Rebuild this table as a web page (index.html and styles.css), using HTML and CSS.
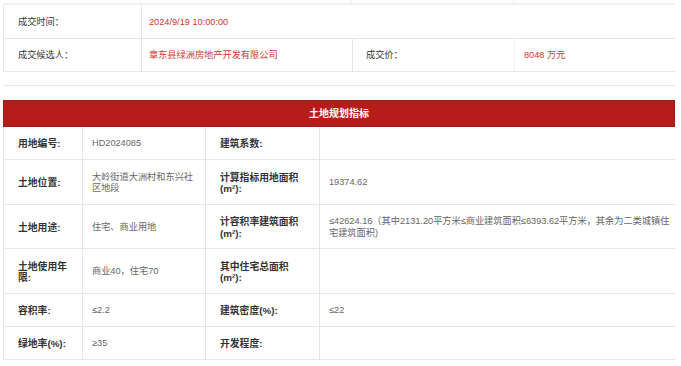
FILE: index.html
```html
<!DOCTYPE html>
<html lang="zh">
<head>
<meta charset="utf-8">
<title>土地规划指标</title>
<link rel="stylesheet" href="styles.css">
</head>
<body>
<div class="page">
  <div class="stub">
    <div class="stub-cell c1"></div>
    <div class="stub-cell c2"></div>
    <div class="stub-cell c3"></div>
    <div class="stub-cell c4"></div>
  </div>
  <table class="deal">
    <colgroup>
      <col class="d1"><col class="d2"><col class="d3"><col class="d4">
    </colgroup>
    <tr class="r1">
      <td class="lab">成交时间：</td>
      <td class="val red" colspan="3">2024/9/19 10:00:00</td>
    </tr>
    <tr class="r2">
      <td class="lab">成交候选人：</td>
      <td class="val red">章东县绿洲房地产开发有限公司</td>
      <td class="lab lab3">成交价：</td>
      <td class="val red val4">8048 万元</td>
    </tr>
  </table>
  <div class="spacer"></div>

  <div class="band">土地规划指标</div>
  <table class="plan">
    <colgroup>
      <col class="p1"><col class="p2"><col class="p3"><col class="p4">
    </colgroup>
    <tr class="h33">
      <td class="k">用地编号:</td>
      <td class="v">HD2024085</td>
      <td class="k k3">建筑系数:</td>
      <td class="v"></td>
    </tr>
    <tr class="h45">
      <td class="k">土地位置:</td>
      <td class="v">大岭街道大洲村和东兴社区地段</td>
      <td class="k k3">计算指标用地面积(m²):</td>
      <td class="v">19374.62</td>
    </tr>
    <tr class="h44">
      <td class="k">土地用途:</td>
      <td class="v">住宅、商业用地</td>
      <td class="k k3">计容积率建筑面积(m²):</td>
      <td class="v long">≤42624.16（其中2131.20平方米≤商业建筑面积≤6393.62平方米，其余为二类城镇住宅建筑面积)</td>
    </tr>
    <tr class="h45">
      <td class="k">土地使用年限:</td>
      <td class="v">商业40，住宅70</td>
      <td class="k k3">其中住宅总面积(m²):</td>
      <td class="v"></td>
    </tr>
    <tr class="h33">
      <td class="k">容积率:</td>
      <td class="v">≤2.2</td>
      <td class="k k3">建筑密度(%):</td>
      <td class="v">≤22</td>
    </tr>
    <tr class="h33">
      <td class="k">绿地率(%):</td>
      <td class="v">≥35</td>
      <td class="k k3">开发程度:</td>
      <td class="v"></td>
    </tr>
  </table>
</div>
</body>
</html>
```

FILE: styles.css
```css
* { box-sizing: border-box; }
html, body { margin: 0; padding: 0; background: #fff; }
body {
  font-family: "Liberation Sans", "Noto Sans CJK SC", sans-serif;
  color: #333;
}
.page {
  width: 672px;
  margin-left: 3px;
}
.stub {
  display: flex;
  height: 5px;
  border-bottom: 2px solid #f1f1f1;
}
.stub-cell { height: 100%; border-right: 1px solid #f1f1f1; }
.stub .c1 { width: 138px; }
.stub .c2 { width: 211px; }
.stub .c3 { width: 162px; }
.stub .c4 { width: 161px; border-right: none; }

table {
  width: 672px;
  border-collapse: collapse;
  table-layout: fixed;
}
td {
  padding: 0;
  vertical-align: middle;
}
.deal .d1 { width: 138px; }
.deal .d2 { width: 211px; }
.deal .d3 { width: 162px; }
.deal .d4 { width: 161px; }
.deal td {
  font-size: 9.2px;
  line-height: 12px;
  border-bottom: 1px solid #e6e6e6;
  border-left: 1px solid #e6e6e6;
}
.deal tr.r1 td { height: 33px; padding-top: 2px; }
.deal tr.r2 td { height: 33px; }
.deal td.lab { padding-left: 14px; color: #333; }
.deal td.val { padding-left: 7px; }
.deal td.lab3 { padding-left: 13px; }
.deal td.val4 { padding-left: 9px; border-left: 1px solid #f1f1f1; }
.red { color: #d2362f; }
.spacer {
  height: 14px;
  border-bottom: 1px solid #e6e6e6;
}

.band {
  margin-top: 14px;
  height: 27px;
  background: #b51d1a;
  border: 1px solid #a01a16;
  color: #fff;
  font-size: 10px;
  font-weight: bold;
  line-height: 25px;
  text-align: center;
}
.plan .p1 { width: 79px; }
.plan .p2 { width: 123px; }
.plan .p3 { width: 114px; }
.plan .p4 { width: 356px; }
.plan td {
  border-bottom: 1px solid #e6e6e6;
  border-left: 1px solid #e6e6e6;
  line-height: 11.5px;
}
.plan tr.h33 td { height: 33px; }
.plan tr.h44 td { height: 44px; }
.plan tr.h45 td { height: 45px; }
.plan td.k {
  font-size: 9.8px;
  font-weight: bold;
  color: #333;
  padding: 2px 6px 0 14px;
}
.plan td.k3 { padding-right: 14px; }
.plan td.v {
  font-size: 9.2px;
  color: #666;
  padding: 2px 8px 0 9px;
}
.plan td.long { padding-right: 4px; }
```
